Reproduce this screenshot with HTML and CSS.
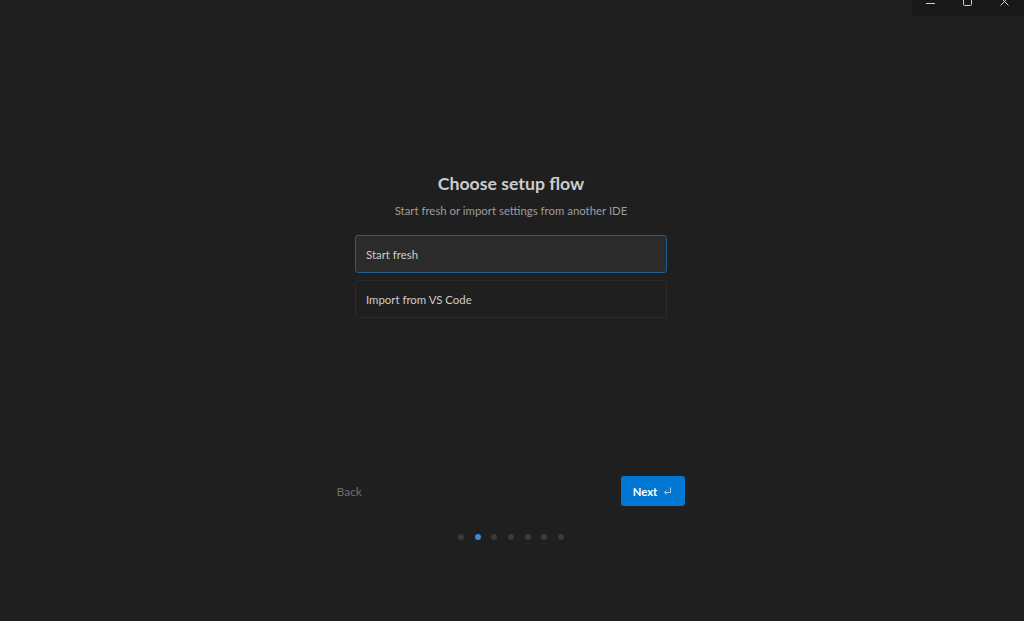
FILE: index.html
```html
<!DOCTYPE html>
<html lang="en">
<head>
    <meta charset="UTF-8">
    <meta name="viewport" content="width=device-width, initial-scale=1.0">
    <title>Setup</title>
    <link rel="stylesheet" href="styles.css">
</head>
<body>
    <div class="titlebar">
        <div class="window-controls">
            <span class="win-btn">
                <svg width="10" height="10" viewBox="0 0 10 10"><path d="M0 3.5h9" stroke="#cccccc" stroke-width="1"/></svg>
            </span>
            <span class="win-btn">
                <svg width="10" height="10" viewBox="0 0 10 10"><rect x="0.5" y="-3.5" width="8" height="9" rx="1" fill="none" stroke="#cccccc" stroke-width="1"/></svg>
            </span>
            <span class="win-btn">
                <svg width="10" height="10" viewBox="0 0 10 10"><path d="M0.5 -2.5L8.5 5.5M8.5 -2.5L0.5 5.5" stroke="#cccccc" stroke-width="1"/></svg>
            </span>
        </div>
    </div>

    <div class="wizard">
        <div class="step">
            <h1>Choose setup flow</h1>
            <p class="subtitle">Start fresh or import settings from another IDE</p>

            <div class="options">
                <button class="option selected">Start fresh</button>
                <button class="option">Import from VS Code</button>
            </div>
        </div>

        <div class="footer">
            <button class="back-button" disabled>Back</button>
            <button class="next-button">
                Next
                <svg width="9" height="9" viewBox="0 0 9 9"><path d="M7.5 0.5v5h-6M3.5 3.5l-2 2 2 2" fill="none" stroke="#9fcbf0" stroke-width="1"/></svg>
            </button>
        </div>

        <div class="dots">
            <span class="dot"></span>
            <span class="dot active"></span>
            <span class="dot"></span>
            <span class="dot"></span>
            <span class="dot"></span>
            <span class="dot"></span>
            <span class="dot"></span>
        </div>
    </div>
</body>
</html>
```

FILE: styles.css
```css
html, body {
    height: 100%;
}
body {
    font-family: Lato, 'Open Sans', sans-serif;
    background-color: #1f1f1f;
    color: #cccccc;
    margin: 0;
    overflow: hidden;
}
.titlebar {
    display: flex;
    justify-content: flex-end;
    height: 16px;
}
.window-controls {
    display: flex;
    width: 112px;
    background-color: #181818;
}
.win-btn {
    flex: 1;
    display: flex;
    justify-content: center;
    align-items: flex-start;
}
.wizard {
    display: flex;
    flex-direction: column;
    align-items: center;
    padding-top: 157px;
    padding-right: 2px;
}
.step {
    width: 312px;
    display: flex;
    flex-direction: column;
    align-items: center;
}
h1 {
    margin: 0;
    font-size: 17.7px;
    font-weight: 700;
    color: #cccccc;
    line-height: 22px;
}
.subtitle {
    margin: 8px 0 0;
    font-size: 11.4px;
    color: #9d9d9d;
    line-height: 16px;
}
.options {
    width: 100%;
    display: flex;
    flex-direction: column;
    gap: 7px;
    margin-top: 16px;
}
.option {
    font-family: inherit;
    font-size: 11.4px;
    text-align: left;
    height: 38px;
    padding: 0 10px;
    border: 1px solid #2b2b2b;
    border-radius: 3px;
    background-color: #1f1f1f;
    color: #cccccc;
    cursor: pointer;
}
.option.selected {
    background-color: #2b2b2b;
    border-color: #1d5f95;
}
.footer {
    width: 348px;
    display: flex;
    justify-content: space-between;
    align-items: center;
    margin-top: 158px;
    margin-right: 1px;
}
.back-button {
    font-family: inherit;
    font-size: 12px;
    background: none;
    border: none;
    padding: 0;
    color: #6e6e6e;
}
.next-button {
    font-family: inherit;
    font-size: 11.3px;
    font-weight: 700;
    height: 30px;
    width: 64px;
    display: flex;
    align-items: center;
    justify-content: center;
    gap: 6px;
    border: none;
    border-radius: 3px;
    background-color: #0078d4;
    color: #ffffff;
    cursor: pointer;
}
.dots {
    display: flex;
    gap: 10.67px;
    margin-top: 28px;
}
.dot {
    width: 6px;
    height: 6px;
    border-radius: 50%;
    background-color: #3a3a3a;
}
.dot.active {
    background-color: #3a8ad6;
}
```
